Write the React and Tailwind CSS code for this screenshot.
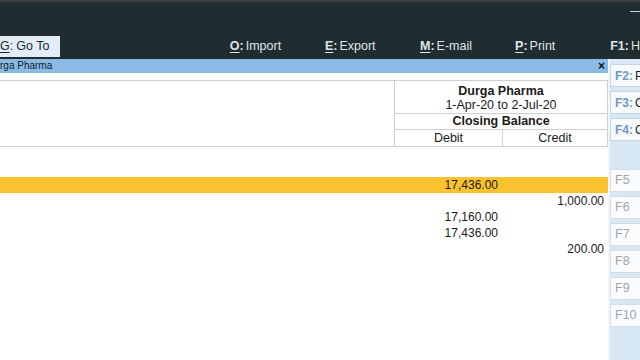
const tools = [
  { k: 'O', label: 'Import' },
  { k: 'E', label: 'Export' },
  { k: 'M', label: 'E-mail' },
  { k: 'P', label: 'Print' },
];

const rows = [
  { debit: '17,436.00', credit: '', active: true },
  { debit: '', credit: '1,000.00' },
  { debit: '17,160.00', credit: '' },
  { debit: '17,436.00', credit: '' },
  { debit: '', credit: '200.00' },
];

const topKeys = [
  { k: 'F2', label: 'P' },
  { k: 'F3', label: 'C' },
  { k: 'F4', label: 'C' },
];

const lowKeys = ['F5', 'F6', 'F7', 'F8', 'F9', 'F10'];

export default function App() {
  return (
    <div className="w-[640px] h-[360px] overflow-hidden bg-white flex flex-col font-['Liberation_Sans',Arial,sans-serif] text-[12px]">
      {/* Top dark bar */}
      <div className="h-[59px] bg-[#1f2d30] border-t-2 border-[#3b3f41] flex flex-col">
        <div className="flex justify-end pt-[9px]">
          <div className="w-[10px] h-[1px] bg-[#c9d0d2]" />
        </div>
        <div className="mt-auto mb-[2px] flex items-center h-[21px]">
          <div className="w-[61px] h-[21px] bg-[#e4edf7] text-[#1b2a33] flex items-center text-[12.5px]">
            <span className="underline underline-offset-2">G</span>
            <span className="mr-[3px]">:</span>
            <span>Go To</span>
          </div>
          <div className="w-[171px]" />
          {tools.map((t) => (
            <div key={t.k} className="w-[96px] text-[#dfe5e7] flex items-center text-[12.5px]">
              <span className="font-bold underline underline-offset-2">{t.k}</span>
              <span className="font-bold mr-[2px]">:</span>
              <span>{t.label}</span>
            </div>
          ))}
          <div className="text-[#dfe5e7] flex items-center text-[12.5px]">
            <span className="font-bold">F1:</span>
            <span className="ml-[2px]">H</span>
          </div>
        </div>
      </div>

      <div className="flex flex-1">
        {/* Main report */}
        <div className="w-[608px] flex flex-col">
          <div className="h-[14px] bg-[#8bbae5] flex items-center justify-between pr-[3px]">
            <span className="text-[10px] text-[#10202c] leading-none">rga Pharma</span>
            <span className="text-[12px] font-bold text-[#0c1620] leading-none">×</span>
          </div>
          <div className="h-[7px]" />
          <div className="flex border-t border-b border-[#cfcfcf] h-[67px]">
            <div className="w-[394px]" />
            <div className="w-[214px] border-l border-r border-[#cfcfcf] flex flex-col text-[#1a1a1a] text-[12.5px]">
              <div className="h-[17px] flex items-end justify-center font-bold leading-none pb-[1px]">Durga Pharma</div>
              <div className="h-[16px] flex items-center justify-center leading-none border-b border-[#cfcfcf]">1-Apr-20 to 2-Jul-20</div>
              <div className="h-[16px] flex items-center justify-center font-bold leading-none border-b border-[#cfcfcf]">Closing Balance</div>
              <div className="flex-1 flex leading-none">
                <div className="w-[108px] border-r border-[#cfcfcf] flex items-center justify-center">Debit</div>
                <div className="flex-1 flex items-center justify-center">Credit</div>
              </div>
            </div>
          </div>
          <div className="h-[30px]" />
          {rows.map((r, i) => (
            <div
              key={i}
              className={
                r.active
                  ? 'h-[16px] flex items-center bg-[#fbc22f] text-[#1a1a1a] leading-none'
                  : 'h-[16px] flex items-center text-[#1a1a1a] leading-none'
              }
            >
              <div className="w-[394px]" />
              <div className="w-[104px] text-right">{r.debit}</div>
              <div className="w-[106px] text-right">{r.credit}</div>
            </div>
          ))}
        </div>

        {/* Right key panel */}
        <div className="flex-1 bg-[#f2f5f8] pl-[2px]">
          <div className="h-full bg-[#d8e7f4] flex flex-col pt-[5px]">
            {topKeys.map((t) => (
              <div key={t.k} className="h-[23px] mb-[4px] bg-[#f7fafd] border border-[#c7d6e4] flex items-center pl-[4px] leading-none">
                <span className="font-bold text-[#6f98c2] mr-[2px]">{t.k}:</span>
                <span className="text-[#1a1a1a]">{t.label}</span>
              </div>
            ))}
            <div className="h-[24px]" />
            {lowKeys.map((k) => (
              <div key={k} className="h-[23px] mb-[4px] bg-[#fbfcfe] border border-[#d3dee8] flex items-center pl-[4px] leading-none text-[#a0a4a8] text-[12.5px]">
                {k}
              </div>
            ))}
          </div>
        </div>
      </div>
    </div>
  );
}
